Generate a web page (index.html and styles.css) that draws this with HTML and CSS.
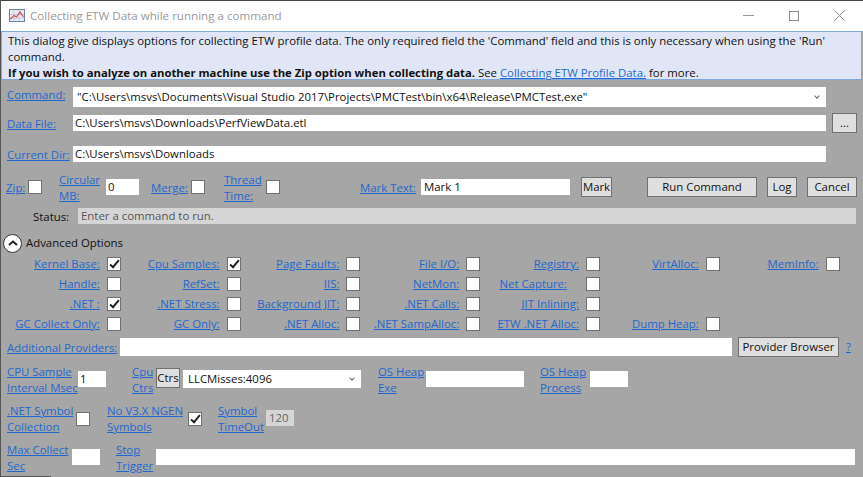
FILE: index.html
```html
<!DOCTYPE html>
<html lang="en">
<head>
    <meta charset="UTF-8" />
    <meta name="viewport" content="width=device-width, initial-scale=1" />
    <title>Collecting ETW Data while running a command</title>
    <link rel="stylesheet" href="styles.css">
</head>
<body>
    <div class="window">
        <div class="titlebar">
            <svg class="app-icon" width="16" height="14" viewBox="0 0 16 14">
                <rect x="0.5" y="0.5" width="15" height="12" fill="#e8ecf6" stroke="#6f7f9c" />
                <path d="M1 5.5H15M1 9H15M5 1V12M10 1V12" stroke="#c3cce0" fill="none" />
                <path d="M1.5 10L5 6.5L7.5 8L11 3L14.5 8" stroke="#d9534f" stroke-width="1.3" fill="none" />
            </svg>
            <span class="title">Collecting ETW Data while running a command</span>
            <div class="controls">
                <svg width="11" height="12" viewBox="0 0 11 12"><path d="M0 5.5H11" stroke="#999" /></svg>
                <svg width="12" height="12" viewBox="0 0 12 12"><rect x="1.5" y="1.5" width="9" height="9" fill="none" stroke="#888" /></svg>
                <svg width="11" height="12" viewBox="0 0 11 12"><path d="M0.5 0.5L10.5 10.5M10.5 0.5L0.5 10.5" stroke="#888" /></svg>
            </div>
        </div>

        <div class="info">
            This dialog give displays options for collecting ETW profile data. The only required field the 'Command' field and this is only necessary when using the 'Run' command.<br>
            <b>If you wish to analyze on another machine use the Zip option when collecting data.</b> See <a href="#">Collecting ETW Profile Data.</a> for more.
        </div>

        <div class="form">
            <div class="row path-row command-row">
                <a class="path-label" href="#">Command:</a>
                <div class="combo wide"><span class="quoted">"C:\Users\msvs\Documents\Visual Studio 2017\Projects\PMCTest\bin\x64\Release\PMCTest.exe"</span><span class="caret"></span></div>
            </div>
            <div class="row path-row file-row">
                <a class="path-label" href="#">Data File:</a>
                <input class="field wide" value="C:\Users\msvs\Downloads\PerfViewData.etl">
                <button class="btn browse">...</button>
            </div>
            <div class="row path-row dir-row">
                <a class="path-label" href="#">Current Dir:</a>
                <input class="field wide" value="C:\Users\msvs\Downloads">
            </div>

            <div class="row actions">
                <a href="#" class="zip">Zip:</a><span class="check"></span>
                <a href="#" class="two-line circular">Circular MB:</a><input class="field circ-input" value="0">
                <a href="#" class="merge">Merge:</a><span class="check"></span>
                <a href="#" class="two-line thread">Thread Time:</a><span class="check thread-check"></span>
                <a href="#" class="mark-label">Mark Text:</a><input class="field mark-input" value="Mark 1">
                <button class="btn mark">Mark</button>
                <button class="btn run">Run Command</button>
                <button class="btn log">Log</button>
                <button class="btn cancel">Cancel</button>
            </div>

            <div class="row status-row">
                <span class="status-label">Status:</span>
                <div class="status">Enter a command to run.</div>
            </div>

            <div class="row advanced">
                <span class="circle">
                    <svg width="10" height="6" viewBox="0 0 10 6"><path d="M1 5L5 1.5L9 5" fill="none" stroke="#222" stroke-width="2" /></svg>
                </span>
                <span>Advanced Options</span>
            </div>

            <div class="options">
                <div class="opt"><a href="#">Kernel Base:</a><span class="check on"></span></div>
                <div class="opt"><a href="#">Cpu Samples:</a><span class="check on"></span></div>
                <div class="opt"><a href="#">Page Faults:</a><span class="check"></span></div>
                <div class="opt"><a href="#">File I/O:</a><span class="check"></span></div>
                <div class="opt"><a href="#">Registry:</a><span class="check"></span></div>
                <div class="opt"><a href="#">VirtAlloc:</a><span class="check"></span></div>
                <div class="opt"><a href="#">MemInfo:</a><span class="check"></span></div>

                <div class="opt"><a href="#">Handle:</a><span class="check"></span></div>
                <div class="opt"><a href="#">RefSet:</a><span class="check"></span></div>
                <div class="opt"><a href="#">IIS:</a><span class="check"></span></div>
                <div class="opt"><a href="#">NetMon:</a><span class="check"></span></div>
                <div class="opt"><a href="#" class="net-capture">Net Capture:</a><span class="check"></span></div>
                <div class="opt"></div>
                <div class="opt"></div>

                <div class="opt"><a href="#">.NET :</a><span class="check on"></span></div>
                <div class="opt"><a href="#">.NET Stress:</a><span class="check"></span></div>
                <div class="opt"><a href="#">Background JIT:</a><span class="check"></span></div>
                <div class="opt"><a href="#">.NET Calls:</a><span class="check"></span></div>
                <div class="opt"><a href="#">JIT Inlining:</a><span class="check"></span></div>
                <div class="opt"></div>
                <div class="opt"></div>

                <div class="opt"><a href="#">GC Collect Only:</a><span class="check"></span></div>
                <div class="opt"><a href="#">GC Only:</a><span class="check"></span></div>
                <div class="opt"><a href="#">.NET Alloc:</a><span class="check"></span></div>
                <div class="opt"><a href="#">.NET SampAlloc:</a><span class="check"></span></div>
                <div class="opt"><a href="#">ETW .NET Alloc:</a><span class="check"></span></div>
                <div class="opt"><a href="#">Dump Heap:</a><span class="check"></span></div>
                <div class="opt"></div>
            </div>

            <div class="row providers">
                <a href="#" class="providers-label">Additional Providers:</a>
                <input class="field providers-input">
                <button class="btn browser">Provider Browser</button>
                <a href="#" class="help">?</a>
            </div>

            <div class="row cpu-row">
                <a href="#" class="two-line interval">CPU Sample Interval Msec</a><input class="field interval-input" value="1">
                <a href="#" class="two-line cpu-ctrs">Cpu Ctrs</a><button class="btn ctrs">Ctrs</button>
                <div class="combo ctr-combo"><span>LLCMisses:4096</span><span class="caret"></span></div>
                <a href="#" class="two-line heap-exe">OS Heap Exe</a><input class="field heap-exe-input">
                <a href="#" class="two-line heap-proc">OS Heap Process</a><input class="field heap-proc-input">
            </div>

            <div class="row symbol-row">
                <a href="#" class="two-line sym-coll">.NET Symbol Collection</a><span class="check"></span>
                <a href="#" class="two-line ngen">No V3.X NGEN Symbols</a><span class="check on"></span>
                <a href="#" class="two-line timeout">Symbol TimeOut</a><input class="field timeout-input" value="120" disabled>
            </div>

            <div class="row max-row">
                <a href="#" class="two-line max-sec">Max Collect Sec</a><input class="field max-input">
                <a href="#" class="two-line stop">Stop Trigger</a><input class="field stop-input">
            </div>

            <div class="edge"></div>
        </div>
    </div>
</body>
</html>
```

FILE: styles.css
```css
html, body {
    margin: 0;
    padding: 0;
    height: 100%;
    overflow: hidden;
}
body {
    font-family: 'Open Sans', 'Noto Sans', sans-serif;
    font-size: 11.4px;
    line-height: 16px;
    color: #111;
}
b {
    font-size: 11.3px;
}
a {
    color: #1f68d0;
    text-decoration: underline;
}
.window {
    height: 477px;
    box-sizing: border-box;
    border-top: 1px solid #444;
    border-left: 1px solid #555;
    background: #a6a6a6;
    display: flex;
    flex-direction: column;
    overflow: hidden;
}
.titlebar {
    height: 30px;
    flex: none;
    background: white;
    display: flex;
    align-items: center;
    padding-left: 8px;
}
.app-icon {
    margin-right: 5px;
}
.title {
    color: #9a9a9a;
    font-size: 11.6px;
}
.controls {
    margin-left: auto;
    margin-right: 18px;
    display: flex;
    gap: 34px;
}
.info {
    height: 49px;
    flex: none;
    box-sizing: border-box;
    padding: 1px 6px;
    background: #e0e6f6;
    border: 1px solid #7fa9dc;
    margin-right: 1px;
}
.form {
    flex: 1;
    display: flex;
    flex-direction: column;
}
.row {
    display: flex;
    align-items: center;
    flex: none;
}
.field {
    border: none;
    outline: none;
    background: white;
    height: 16px;
    box-sizing: border-box;
    padding: 0 2px;
    margin: 0;
    font: inherit;
    color: #111;
}
.combo {
    background: white;
    display: flex;
    align-items: center;
    justify-content: space-between;
    box-sizing: border-box;
}
.caret {
    width: 3px;
    height: 3px;
    border-right: 1px solid #666;
    border-bottom: 1px solid #666;
    transform: rotate(45deg);
    margin-right: 7px;
    margin-bottom: 3px;
}
.btn {
    font: inherit;
    color: #111;
    background: #dfdfdf;
    border: 1px solid #707070;
    height: 20px;
    padding: 0;
    margin: 0;
    box-sizing: border-box;
}
.check {
    display: inline-block;
    flex: none;
    width: 14px;
    height: 14px;
    box-sizing: border-box;
    background: white;
    border: 1px solid #707070;
    position: relative;
}
.check.on::after {
    content: "";
    position: absolute;
    left: 4px;
    top: 0;
    width: 3px;
    height: 8px;
    border-right: 2px solid #222;
    border-bottom: 2px solid #222;
    transform: rotate(40deg);
}
.two-line {
    display: block;
    flex: none;
    box-sizing: border-box;
    margin-top: 2px;
}

/* path rows */
.path-row {
    padding-left: 6px;
}
.path-label {
    width: 66px;
    flex: none;
}
.command-row {
    margin-top: 7px;
    height: 20px;
}
.command-row .path-label {
    margin-top: -4px;
}
.command-row .combo {
    height: 20px;
}
.file-row {
    margin-top: 8px;
    height: 16px;
}
.file-row .path-label, .dir-row .path-label {
    margin-top: 2px;
}
.dir-row {
    margin-top: 15px;
    height: 16px;
}
.wide {
    width: 753px;
    flex: none;
}
.quoted {
    padding-left: 4px;
}
.browse {
    width: 25px;
    margin-left: 6px;
}

/* zip, merge, mark */
.actions {
    margin-top: 10px;
    height: 30px;
    padding-left: 5px;
}
.actions > a {
    padding-top: 2px;
}
.actions > a.two-line {
    padding-top: 0;
}
.zip {
    width: 22px;
}
.circular {
    width: 44px;
    margin-left: 17px;
}
.circ-input {
    width: 33px;
    margin-left: 3px;
}
.merge {
    margin-left: 12px;
    width: 40px;
}
.thread {
    width: 40px;
    margin-left: 19px;
}
.thread-check {
    margin-left: 2px;
}
.mark-label {
    margin-left: 80px;
    width: 61px;
}
.mark-input {
    width: 149px;
    padding-left: 3px;
}
.mark {
    width: 31px;
    margin-left: 11px;
}
.run {
    width: 110px;
    margin-left: 35px;
}
.log {
    width: 30px;
    margin-left: 10px;
}
.cancel {
    width: 50px;
    margin-left: 10px;
}

.status-row {
    margin-top: 6px;
    height: 16px;
    padding-left: 32px;
}
.status-label {
    width: 45px;
    padding-top: 2px;
}
.status {
    width: 778px;
    background: #d5d5d5;
    height: 16px;
    color: #555;
    padding-left: 3px;
    box-sizing: border-box;
}
.advanced {
    margin-top: 9px;
    height: 20px;
    padding-left: 2px;
    gap: 4px;
}
.circle {
    width: 19px;
    height: 19px;
    box-sizing: border-box;
    border-radius: 50%;
    border: 1px solid #333;
    background: white;
    display: flex;
    align-items: center;
    justify-content: center;
}

/* provider checkboxes */
.options {
    margin-top: 1px;
    display: grid;
    grid-template-columns: repeat(7, 119.8px);
    grid-auto-rows: 20px;
}
.opt {
    display: flex;
    align-items: center;
    justify-content: flex-end;
    gap: 7px;
}
.net-capture {
    margin-right: 12px;
}

.providers {
    margin-top: 3px;
    height: 20px;
    padding-left: 6px;
}
.providers-label {
    width: 113px;
    flex: none;
    padding-top: 2px;
}
.providers-input {
    width: 612px;
    height: 18px;
}
.browser {
    width: 101px;
    margin-left: 6px;
}
.help {
    margin-left: 7px;
}

.cpu-row {
    margin-top: 6px;
    height: 32px;
    padding-left: 6px;
}
.interval {
    width: 71px;
}
.interval-input {
    width: 28px;
}
.cpu-ctrs {
    width: 24px;
    margin-left: 26px;
}
.ctrs {
    width: 24px;
    margin-left: 0;
    margin-top: -2px;
}
.ctr-combo {
    width: 178px;
    height: 18px;
    margin-left: 3px;
    padding-left: 5px;
}
.heap-exe {
    width: 48px;
    margin-left: 17px;
}
.heap-exe-input {
    width: 98px;
}
.heap-proc {
    width: 50px;
    margin-left: 16px;
}
.heap-proc-input {
    width: 38px;
}

.symbol-row {
    margin-top: 8px;
    height: 32px;
    padding-left: 6px;
}
.symbol-row .two-line {
    margin-top: 0;
}
.sym-coll {
    width: 69px;
}
.ngen {
    width: 81px;
    margin-left: 17px;
}
.timeout {
    width: 48px;
    margin-left: 16px;
}
.timeout-input {
    width: 28px;
    background: #d5d5d5;
    color: #666;
    padding-left: 3px;
    margin-top: -2px;
}

.max-row {
    margin-top: 6px;
    height: 32px;
    padding-left: 6px;
}
.max-sec {
    width: 65px;
}
.max-input {
    width: 28px;
}
.stop {
    width: 40px;
    margin-left: 16px;
}
.stop-input {
    width: 699px;
}
.edge {
    flex: none;
    width: 50px;
    height: 1px;
    margin-top: 3px;
    background: #555;
}
```
